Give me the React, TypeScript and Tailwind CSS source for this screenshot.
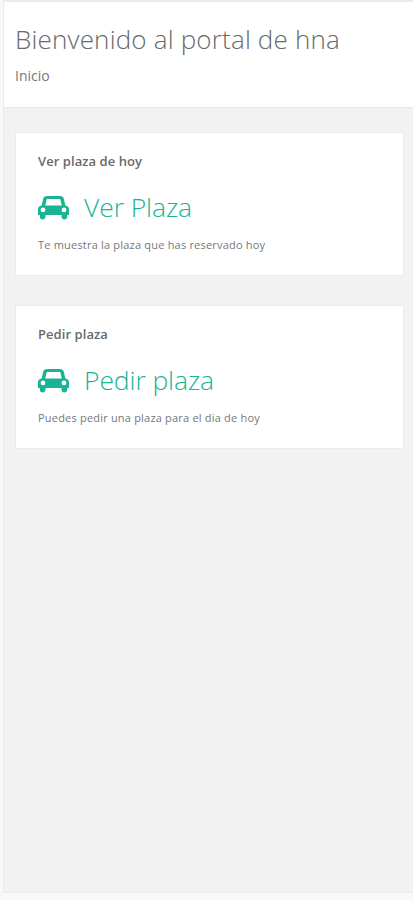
type PanelProps = {
  title: string;
  action: string;
  description: string;
};

function CarIcon() {
  return (
    <svg viewBox="0 0 31 24" className="h-6 w-[31px]" fill="currentColor" aria-hidden="true">
      <path
        fillRule="evenodd"
        d="M9 0h13c2 0 3.300 1 3.800 2.800L27.400 9.600C29.600 9.800 31 11.300 31 13.400v5.100c0 .4-.2.6-.6.6H29.200v1.500c0 1.800-1.100 3-2.800 3s-2.900-1.200-2.900-3v-1.500h-16v1.500c0 1.800-1.200 3-2.900 3s-2.800-1.200-2.800-3v-1.500H.6c-.4 0-.6-.2-.6-.6v-5.100c0-2.100 1.400-3.600 3.600-3.800L5.200 2.800C5.700 1 7 0 9 0zM9.500 3.100c-.5 0-.8.2-.9.600L7.200 9.600h16.600l-1.400-5.900c-.1-.4-.4-.6-.9-.6zM5 11.500a2.400 2.400 0 1 0 0 4.800 2.400 2.400 0 0 0 0-4.800zM26 11.500a2.400 2.400 0 1 0 0 4.800 2.400 2.400 0 0 0 0-4.800z"
      />
    </svg>
  );
}

function Panel({ title, action, description }: PanelProps) {
  return (
    <section className="h-36 border border-[#ebebeb] bg-white px-[22px] pt-5">
      <h5 className="text-[13px] leading-4 font-semibold tracking-[0.06px] text-[#676a6c]">{title}</h5>
      <a href="#" className="mt-[18px] flex h-[42px] items-center gap-[15px] text-[#1ab394]">
        <CarIcon />
        <span className="text-[26.5px] font-light tracking-[-0.1px]">{action}</span>
      </a>
      <p className="mt-2 text-[11px] leading-4 tracking-[0.2px] text-[#76787a]">{description}</p>
    </section>
  );
}

export default function App() {
  return (
    <div className="flex h-[900px] flex-col bg-[#f8f8f8] pl-[3px] font-['Open_Sans',sans-serif]">
      <main className="h-[893px] border-t-2 border-b border-l border-[#ebebeb] bg-[#f2f2f2]">
        <header className="h-[106px] border-b border-[#e7e7e7] bg-white px-[11px] pt-[17px]">
          <h2 className="text-[26px] leading-10 font-light tracking-[0.18px] text-[#676a6c]">Bienvenido al portal de hna</h2>
          <p className="mt-[7px] text-sm text-[#76787a]">Inicio</p>
        </header>
        <div className="flex flex-col gap-[29px] pt-6 pr-[9px] pl-[11px]">
          <Panel title="Ver plaza de hoy" action="Ver Plaza" description="Te muestra la plaza que has reservado hoy" />
          <Panel title="Pedir plaza" action="Pedir plaza" description="Puedes pedir una plaza para el dia de hoy" />
        </div>
      </main>
    </div>
  );
}
